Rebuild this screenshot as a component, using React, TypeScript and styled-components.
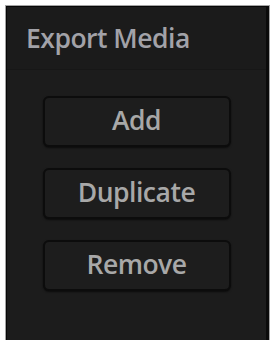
import React from 'react';
import styled, { createGlobalStyle } from 'styled-components';

const GlobalStyle = createGlobalStyle`
  html, body {
    margin: 0;
    padding: 0;
    background: #ffffff;
    overflow: hidden;
  }
`;

// Outer light frame around the dark panel
const Frame = styled.div`
  margin: 5px 3px 0 5px;
  height: 345px;
  border: 1px solid #a4a4a4;
  border-bottom: none;
  box-sizing: border-box;
`;

const Panel = styled.div`
  height: 100%;
  background: #1c1c1c;
  border: 1px solid #080808;
  border-bottom: none;
  border-right: 3px solid #0a0a0a;
  box-sizing: border-box;
  font-family: 'Open Sans', 'Liberation Sans', sans-serif;
`;

const Header = styled.div`
  height: 62px;
  display: flex;
  align-items: center;
  padding-left: 19px;
  background: #1b1b1b;
  border-bottom: 1px solid #171717;
  color: #a2a2a8;
  font-size: 26.5px;
  font-weight: 600;
  letter-spacing: -0.5px;
`;

const ButtonList = styled.div`
  display: flex;
  flex-direction: column;
  align-items: center;
  gap: 21px;
  padding-top: 26px;
`;

const Button = styled.button`
  width: 188px;
  height: 51px;
  display: flex;
  align-items: center;
  justify-content: center;
  background: #1d1d1d;
  border: 2px solid #0c0c0c;
  border-radius: 6px;
  box-shadow: 0 1px 2px rgba(0, 0, 0, 0.6);
  color: #a8a8a8;
  font-family: inherit;
  font-size: 26.5px;
  font-weight: 600;
  letter-spacing: -0.5px;
  padding: 0 0 3px;
  cursor: pointer;
`;

const actions = ['Add', 'Duplicate', 'Remove'];

const App: React.FC = () => {
  return (
    <>
      <GlobalStyle />
      <Frame>
        <Panel>
          <Header>Export Media</Header>
          <ButtonList>
            {actions.map((label) => (
              <Button key={label}>{label}</Button>
            ))}
          </ButtonList>
        </Panel>
      </Frame>
    </>
  );
};

export default App;
